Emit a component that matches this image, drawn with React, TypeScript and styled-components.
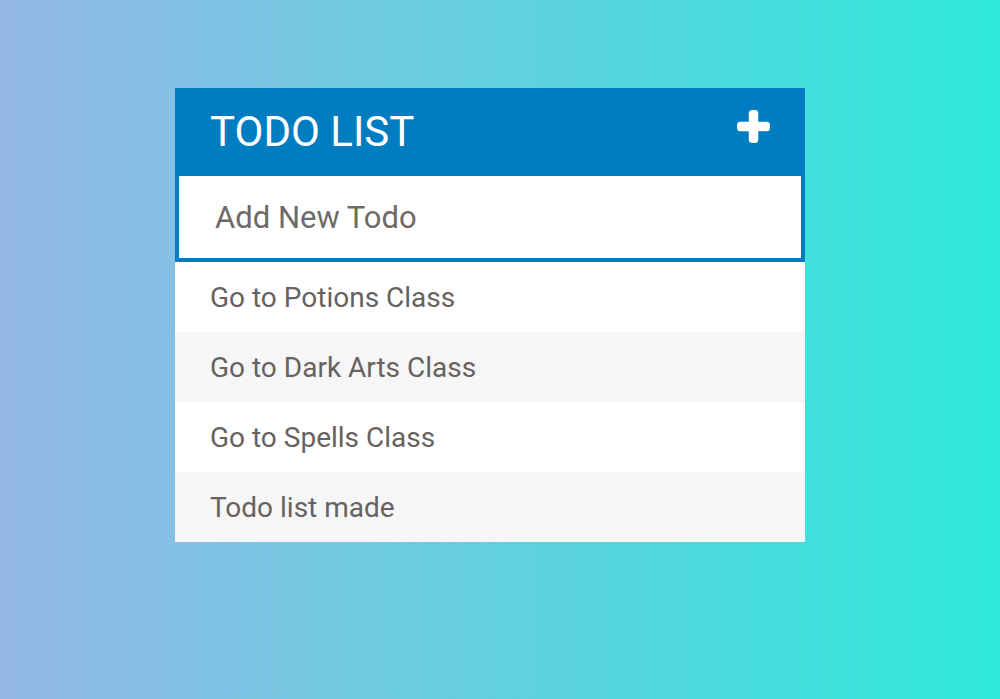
import React from "react";
import styled, { createGlobalStyle } from "styled-components";

const Global = createGlobalStyle`
  html, body { margin: 0; padding: 0; height: 100%; }
  body {
    font-family: Roboto, "Liberation Sans", sans-serif;
    background: linear-gradient(90deg, #95b8e6 0%, #2ee8d9 100%);
    min-height: 699px;
  }
  input::placeholder { color: #6e6a68; opacity: 1; }
`;

const Page = styled.div`
  padding: 88px 0 0 175px;
`;

const Card = styled.div`
  width: 630px;
  display: flex;
  flex-direction: column;
`;

const Header = styled.div`
  height: 85px;
  background: #007dc0;
  display: flex;
  align-items: center;
  justify-content: space-between;
  padding: 0 35px;
  box-sizing: border-box;
`;

const Title = styled.h1`
  margin: 0;
  font-family: Roboto, "Liberation Sans", sans-serif;
  font-weight: 400;
  font-size: 42px;
  color: #ffffff;
  padding-top: 1px;
`;

const AddButton = styled.button`
  background: none;
  border: 0;
  padding: 0;
  margin: -8px 0 0 0;
  width: 33px;
  height: 33px;
  display: flex;
  cursor: pointer;
`;

const Input = styled.input`
  height: 89px;
  box-sizing: border-box;
  border: solid #007dc0;
  border-width: 3px 4px 4px 4px;
  background: #fff;
  padding: 0 0 0 36px;
  font-family: Roboto, "Liberation Sans", sans-serif;
  font-size: 31px;
  color: #666;
  outline: none;
  width: 100%;
  caret-color: #007dc0;
`;

const List = styled.ul`
  list-style: none;
  margin: 0;
  padding: 0;
`;

const Item = styled.li<{ $alt: boolean }>`
  height: 70px;
  display: flex;
  align-items: center;
  padding: 0 35px;
  background: ${(p) => (p.$alt ? "#f6f6f6" : "#ffffff")};
  font-size: 28px;
  color: #67625f;
`;

const todos = [
  "Go to Potions Class",
  "Go to Dark Arts Class",
  "Go to Spells Class",
  "Todo list made",
];

export default function App() {
  return (
    <>
      <Global />
      <Page>
        <Card>
          <Header>
            <Title>TODO LIST</Title>
            <AddButton aria-label="Add">
              <svg width="33" height="33" viewBox="0 0 33 33">
                <rect x="11.75" y="0" width="9.5" height="33" rx="3.5" fill="#fff" />
                <rect x="0" y="11.75" width="33" height="9.5" rx="3.5" fill="#fff" />
              </svg>
            </AddButton>
          </Header>
          <Input placeholder="Add New Todo" autoFocus />
          <List>
            {todos.map((t, i) => (
              <Item key={t} $alt={i % 2 === 1}>
                {t}
              </Item>
            ))}
          </List>
        </Card>
      </Page>
    </>
  );
}
